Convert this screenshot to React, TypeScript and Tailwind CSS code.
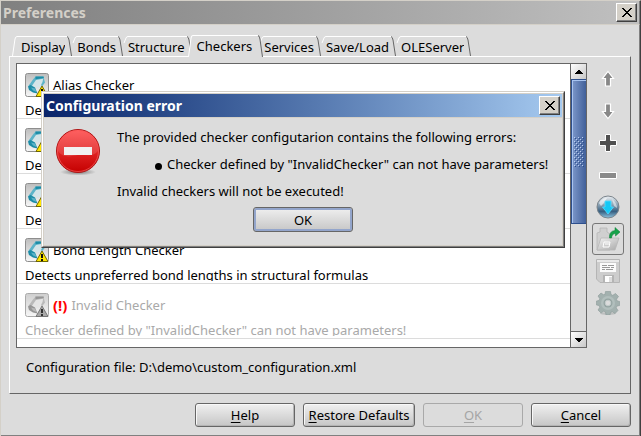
import React from "react";

const tabs = ["Display", "Bonds", "Structure", "Checkers", "Services", "Save/Load", "OLEServer"];

const checkers = [
  { name: "Alias Checker", text: "Detects aliases in structural formulas" },
  { name: "Atom Map Checker", text: "Detects atom maps in structural formulas" },
  { name: "Bond Angle Checker", text: "Detects unpreferred bond angles in structural formulas" },
  { name: "Bond Length Checker", text: "Detects unpreferred bond lengths in structural formulas" },
  { name: "Invalid Checker", text: 'Checker defined by "InvalidChecker" can not have parameters!', invalid: true },
];

function CloseButton({ label }: { label: string }) {
  return (
    <button
      type="button"
      aria-label={label}
      className="flex h-[19px] w-[21px] shrink-0 items-center justify-center border border-t-white border-l-white border-r-[#404040] border-b-[#404040] bg-[#d4d0c8] shadow-[inset_-1px_-1px_0_#808080]"
    >
      <svg width="10" height="9" viewBox="0 0 10 9" shapeRendering="crispEdges" fill="#000">
        <path d="M0 0h2v1h1v1h1v1h2V2h1V1h1V0h2v1H9v1H8v1H7v1H6v1h1v1h1v1h1v1h1v1H8V8H7V7H6V6H4v1H3v1H2v1H0V8h1V7h1V6h1V5h1V4H3V3H2V2H1V1H0z" />
      </svg>
    </button>
  );
}

function Tab({ label, active, first }: { label: string; active: boolean; first: boolean }) {
  const fill = "#dcdcdc";
  return (
    <button
      type="button"
      role="tab"
      aria-selected={active}
      className={active ? "relative z-10 -mx-1 -mb-px flex h-[22px]" : "flex h-5"}
    >
      <svg width="5" height="100%" viewBox="0 0 5 20" preserveAspectRatio="none" className="shrink-0">
        <path d="M0 20 L3 3 Q3.5 .5 5 .5 V20z" fill={fill} stroke="none" />
        <path
          d={active || first ? "M.5 20 L3 3 Q3.5 .5 5 .5" : "M1 7 L3 2 Q3.5 .5 5 .5"}
          fill="none"
          stroke="#fff"
        />
      </svg>
      <span
        className={
          active
            ? "h-full border-t border-white bg-[#dcdcdc] px-1 leading-5"
            : first
              ? "h-full border-t border-white bg-[#dcdcdc] pl-1 leading-5"
              : "h-full border-t border-white bg-[#dcdcdc] leading-5"
        }
      >
        {label}
      </span>
      <svg width="7" height="100%" viewBox="0 0 7 20" preserveAspectRatio="none" className="shrink-0">
        <path d="M0 .5 H2 Q3 .5 4 4 L6.5 20 H0z" fill={fill} />
        <path d="M0 .5 H2" stroke="#fff" />
        <path d="M2 .5 Q3.5 1 4 4 L6.5 20" fill="none" stroke="#666" />
      </svg>
    </button>
  );
}

function CheckerIcon({ gray }: { gray?: boolean }) {
  const dark = gray ? "#959595" : "#1c8ca6";
  const mid = gray ? "#b9b9b9" : "#5cb3c8";
  const light = gray ? "#e4e4e4" : "#d3e4e8";
  return (
    <svg width="24" height="24" viewBox="0 0 24 24" className="shrink-0">
      <defs>
        <linearGradient id={gray ? "tileG" : "tileC"} x1="0" y1="0" x2="0" y2="1">
          <stop offset="0" stopColor={gray ? "#cfcfcf" : "#bdbdbd"} />
          <stop offset="1" stopColor="#f6f6f6" />
        </linearGradient>
      </defs>
      <rect x=".5" y=".5" width="23" height="23" rx="2" fill={gray ? "url(#tileG)" : "url(#tileC)"} stroke={gray ? "#aaa" : "#8e8e8e"} />
      <path d="M8.500 6.500 10 4 18 3.500 20 9 15 14 8 15 3.500 13z" fill={light} />
      <path d="M8 6.500 10.500 3.500 18.500 3.500 19 5.500 11 7 6.500 13.500 3 13.500z" fill={mid} />
      <path d="M10.500 3.500h8l.5 1.500-8.500 1.200z" fill={dark} />
      <path d="M18.500 4 20 9.500 17 13.500 16 12 17.500 9z" fill={mid} />
      <path d="M3 13.500 5.500 12 10 14.500 12.500 20.500 8 19.500 4 17z" fill={dark} />
      <path d="M6 14.500 10 15.500 11.500 19 8 17.500z" fill={mid} />
      <path d="M17 13 23 23.500 H11z" fill={gray ? "#aaa" : "#ffe600"} stroke={gray ? "#777" : "#6f6700"} strokeLinejoin="round" />
      <path d="M16 16h2v4h-2zM16 21h2v2h-2z" fill={gray ? "#333" : "#111"} />
    </svg>
  );
}

function UpArrow() {
  return (
    <svg width="16" height="18" viewBox="0 0 16 18">
      <path d="M8 1.500 13.500 8.500 H10.500 V16 H5.500 V8.500 H2.500z" fill="#888" stroke="#fff" strokeWidth="1.200" />
    </svg>
  );
}

function DownArrow() {
  return (
    <svg width="16" height="18" viewBox="0 0 16 18">
      <path d="M8 16.500 13.500 9.500 H10.500 V2 H5.500 V9.500 H2.500z" fill="#888" stroke="#fff" strokeWidth="1.200" />
    </svg>
  );
}

function PlusIcon() {
  return (
    <svg width="20" height="20" viewBox="0 0 20 20">
      <path d="M7.500 1.500h5v6h6v5h-6v6h-5v-6h-6v-5h6z" fill="#505050" stroke="#fff" />
    </svg>
  );
}

function MinusIcon() {
  return (
    <svg width="20" height="20" viewBox="0 0 20 20">
      <path d="M1.500 7.500h17v6h-17z" fill="#8a8a8a" stroke="#fff" />
    </svg>
  );
}

function GlobeIcon() {
  return (
    <svg width="24" height="24" viewBox="0 0 24 24">
      <defs>
        <linearGradient id="globe" x1="0" y1="0" x2="0" y2="1">
          <stop offset="0" stopColor="#eef2f5" />
          <stop offset=".45" stopColor="#7c97ac" />
          <stop offset=".7" stopColor="#375f80" />
          <stop offset="1" stopColor="#8fc4e0" />
        </linearGradient>
      </defs>
      <circle cx="12" cy="12" r="11" fill="url(#globe)" stroke="#7c858c" />
      <path d="M3 8 Q6 3 11 3 L8 8 5 11z" fill="#fff" opacity=".6" />
      <path d="M16 4 Q21 8 21 13 L18 11z" fill="#fff" opacity=".5" />
      <path d="M9 6h6v6h2.500L12 19 6.500 12H9z" fill="#15c8f5" stroke="#58dcff" strokeWidth=".8" />
    </svg>
  );
}

function FolderIcon() {
  return (
    <svg width="26" height="26" viewBox="0 0 26 26">
      <defs>
        <linearGradient id="folder" x1="0" y1="0" x2="1" y2="1">
          <stop offset="0" stopColor="#f2f2f2" />
          <stop offset="1" stopColor="#a9a9a9" />
        </linearGradient>
      </defs>
      <path d="M2 24V7l3-1V2h7v4l3 2v16z" fill="#d0d0d0" stroke="#b5b5b5" strokeWidth=".8" />
      <path d="M6 12h18l-4 12H2z" fill="url(#folder)" stroke="#b8b8b8" strokeWidth=".8" />
      <path d="M9 16h6l-1 5H8zM10 18h4" fill="none" stroke="#fff" />
      <path d="M14.500 12 Q14 5 20 4.500 V1.500 L25 6 20.500 10 V7.500 Q17 7.500 16.500 12z" fill="#16a34a" stroke="#087d32" strokeWidth=".5" />
    </svg>
  );
}

function DiskIcon() {
  return (
    <svg width="24" height="24" viewBox="0 0 24 24">
      <path d="M.5 .5h23v23H4L.5 20z" fill="#cdcdcd" stroke="#b5b5b5" />
      <path d="M1 1h22v2H1z" fill="#e9e9e9" />
      <path d="M4 4h16v9H4z" fill="#fbfbfb" />
      <path d="M6 6.500h5M12 6.500h6M6 8.500h8M15 8.500h3M6 10.500h3M10 10.500h7" stroke="#999" />
      <path d="M7 16h11v7H7z" fill="#b4b4b4" />
      <path d="M9 17h7v6H9z" fill="#fff" />
      <path d="M13 18h3v5h-3z" fill="#ddd" />
    </svg>
  );
}

function GearIcon() {
  return (
    <svg width="24" height="24" viewBox="0 0 24 24">
      <ellipse cx="12" cy="22.500" rx="8" ry="1.500" fill="#bcbfbf" />
      <g fill="#a3b1af" stroke="#8b9a98" strokeWidth=".6">
        <path d="M9.500 .5h5l.5 3 1.800.8L19.500 2.500l3 3-2 2.700.8 1.800 2.400.5v4l-2.700.5-.8 1.800 1.800 2.700-3 3-2.700-1.800-1.800.8-.5 2.500h-4L9.500 21l-1.800-.8L5 22l-3-3 1.800-2.700L3 14.500l-2.500-.5v-4L3 9.500l.8-1.800L2 5l3-3 2.700 1.800L9 3.300z" />
      </g>
      <circle cx="12" cy="12" r="7" fill="#b2bfbd" />
      <circle cx="12" cy="12" r="4.500" fill="#95a4a2" />
      <circle cx="12" cy="12" r="2.800" fill="#dcdcdc" stroke="#c2cccb" />
    </svg>
  );
}

function ErrorIcon() {
  return (
    <svg width="48" height="48" viewBox="0 0 48 48" className="shrink-0">
      <defs>
        <linearGradient id="err" x1="0" y1="0" x2="0" y2="1">
          <stop offset="0" stopColor="#ff4a4a" />
          <stop offset="1" stopColor="#c40000" />
        </linearGradient>
        <radialGradient id="errShadow">
          <stop offset="0" stopColor="#777" />
          <stop offset="1" stopColor="#dcdcdc" />
        </radialGradient>
      </defs>
      <ellipse cx="24" cy="44" rx="18" ry="3.500" fill="url(#errShadow)" />
      <circle cx="24" cy="23" r="21.500" fill="url(#err)" stroke="#b01515" />
      <circle cx="24" cy="23" r="20.500" fill="none" stroke="#ff7070" strokeWidth=".8" opacity=".7" />
      <path d="M4 23a20 20 0 0 1 40 0c-6 7-13 3-20 4s-14 4-20-4z" fill="#fff" opacity=".13" />
      <path d="M10 19h28v8H10z" fill="#f1f1f1" />
    </svg>
  );
}

const tools = [
  { label: "Move up", icon: <UpArrow /> },
  { label: "Move down", icon: <DownArrow /> },
  { label: "Add checker", icon: <PlusIcon /> },
  { label: "Remove checker", icon: <MinusIcon /> },
  { label: "Load from web", icon: <GlobeIcon /> },
  { label: "Open configuration", icon: <FolderIcon />, framed: true },
  { label: "Save configuration", icon: <DiskIcon /> },
  { label: "Settings", icon: <GearIcon /> },
];

function FooterButton({ label, wide, disabled }: { label: string; wide?: boolean; disabled?: boolean }) {
  return (
    <button
      type="button"
      disabled={disabled}
      className={[
        "h-6 rounded-[3px] border leading-5 whitespace-nowrap",
        wide ? "w-28" : "w-[100px]",
        disabled
          ? "border-[#a9a9a9] text-[#a5a5a5]"
          : "border-[#666] bg-linear-to-b from-[#f0f0f0] to-[#c6c6c6] shadow-[inset_1px_1px_0_#f8f8f8,inset_-1px_-1px_0_#b4b4b4]",
      ].join(" ")}
    >
      <span className="underline underline-offset-2">{label[0]}</span>
      {label.slice(1)}
    </button>
  );
}

function ScrollArrow({ down }: { down?: boolean }) {
  return (
    <button
      type="button"
      aria-label={down ? "Scroll down" : "Scroll up"}
      className="flex h-[15px] w-full shrink-0 items-center justify-center bg-linear-to-br from-white to-[#c8c8c8]"
    >
      <svg width="8" height="4" viewBox="0 0 8 4" shapeRendering="crispEdges">
        <path d={down ? "M0 0h8v1H7v1H6v1H5v1H3V3H2V2H1V1H0z" : "M0 4h8V3H7V2H6V1H5V0H3v1H2v1H1v1H0z"} />
      </svg>
    </button>
  );
}

function ErrorDialog() {
  return (
    <div
      role="dialog"
      aria-label="Configuration error"
      className="absolute top-[90px] left-10 z-20 w-[524px] border border-t-[#d4d0c8] border-r-[#404040] border-b-[#404040] border-l-[#d4d0c8] bg-[#dcdcdc]"
    >
      <div className="border border-t-white border-r-[#808080] border-b-[#808080] border-l-white">
        <div className="border border-[#d4d0c8]">
          <div className="flex h-[23px] items-center justify-between bg-linear-to-r from-[#0a246a] to-[#a6caf0] pr-[2px] pl-[2px] text-[14px] font-bold text-white">
            <span>Configuration error</span>
            <CloseButton label="Close dialog" />
          </div>
          <div className="flex border-t border-[#d4d0c8] pt-[6px] pl-[10px]">
            <div className="pt-[4px]">
              <ErrorIcon />
            </div>
            <div className="pl-[15px] leading-[27px] whitespace-nowrap">
              <p>The provided checker configutarion contains the following errors:</p>
              <ul className="pl-[38px]">
                <li className="flex items-center">
                  <span className="mt-[3px] mr-[5px] h-[7px] w-[7px] rounded-full bg-black" />
                  Checker defined by &quot;InvalidChecker&quot; can not have parameters!
                </li>
              </ul>
              <p>Invalid checkers will not be executed!</p>
            </div>
          </div>
          <div className="flex justify-center pt-[2px] pb-[13px]">
            <button
              type="button"
              className="h-[25px] w-[100px] rounded-[3px] border border-[#666] bg-linear-to-b from-[#f0f0f0] to-[#c6c6c6] leading-5 shadow-[inset_0_0_0_2px_#93a5cb]"
            >
              OK
            </button>
          </div>
        </div>
      </div>
    </div>
  );
}

export default function App() {
  return (
    <div className="relative min-h-screen border border-t-[#d4d0c8] border-r-[#404040] border-b-[#404040] border-l-[#d4d0c8] bg-[#dcdcdc] font-['Noto_Sans','Open_Sans',sans-serif] text-[13px] leading-5 text-black">
      <div className="flex h-[23px] items-center justify-between border-r border-[#808080] bg-linear-to-r from-[#808080] to-[#c0c0c0] pr-[2px] pl-[2px] text-[14px] font-bold text-[#d4d0c8]">
        <span>Preferences</span>
        <CloseButton label="Close" />
      </div>
      <main className="border-t border-r border-b border-t-[#d4d0c8] border-r-[#808080] border-b-[#808080] px-2 pt-[10px] pb-2">
        <div role="tablist" className="flex h-[21px] items-end pl-[3px]">
          {tabs.map((t, i) => (
            <Tab key={t} label={t} active={t === "Checkers"} first={i === 0} />
          ))}
        </div>
        <section className="border border-t-white border-r-[#666] border-b-[#666] border-l-white px-[6px] pt-[6px] pb-3">
          <div className="flex">
            <div className="flex min-w-0 flex-1 border border-[#666]">
              <ul className="min-w-0 flex-1 bg-white pb-[8px]">
                {checkers.map((c) => (
                  <li
                    key={c.name}
                    className={
                      c.invalid
                        ? "h-[55px] border-b border-[#dcdcdc] pt-[9px] pl-2 whitespace-nowrap text-[#a9a9a9]"
                        : "h-[55px] border-b border-[#dcdcdc] pt-[9px] pl-2 whitespace-nowrap"
                    }
                  >
                    <div className="flex h-6 items-center gap-1">
                      <CheckerIcon gray={c.invalid} />
                      {c.invalid && <b className="text-[15px] text-[#f00]">(!)</b>}
                      <span>{c.name}</span>
                    </div>
                    <p className="mt-[3px] h-4 overflow-hidden leading-5">{c.text}</p>
                  </li>
                ))}
              </ul>
              <div className="flex w-4 shrink-0 flex-col border-l border-[#666]">
                <ScrollArrow />
                <div className="flex h-[145px] items-center justify-center border border-r-0 border-[#2d4f8e] bg-linear-to-r from-[#7d98ca] to-[#41609a] shadow-[inset_1px_1px_0_#a8c4f0]">
                  <svg width="10" height="30" viewBox="0 0 10 30" shapeRendering="crispEdges">
                    <pattern id="grip" width="4" height="4" patternUnits="userSpaceOnUse">
                      <path d="M0 0h1v1H0zM2 2h1v1H2z" fill="#b9cdf0" />
                      <path d="M1 1h1v1H1zM3 3h1v1H3z" fill="#2d4f8e" />
                    </pattern>
                    <path d="M0 0h10v30H0z" fill="url(#grip)" />
                  </svg>
                </div>
                <div className="flex-1 border-b border-[#666]" />
                <ScrollArrow down />
              </div>
            </div>
            <div className="flex w-[37px] shrink-0 flex-col pl-[5px]">
              {tools.map((t) => (
                <button
                  key={t.label}
                  type="button"
                  aria-label={t.label}
                  className={
                    t.framed
                      ? "flex h-8 w-8 items-center justify-center rounded-[3px] border border-[#777]"
                      : "flex h-8 w-8 items-center justify-center"
                  }
                >
                  {t.icon}
                </button>
              ))}
            </div>
          </div>
          <p className="pt-[9px] pb-1 pl-[10px]">Configuration file: D:\demo\custom_configuration.xml</p>
        </section>
        <footer className="flex justify-end gap-2 pt-[9px]">
          <FooterButton label="Help" />
          <FooterButton label="Restore Defaults" wide />
          <FooterButton label="OK" disabled />
          <FooterButton label="Cancel" />
        </footer>
      </main>
      <ErrorDialog />
    </div>
  );
}
